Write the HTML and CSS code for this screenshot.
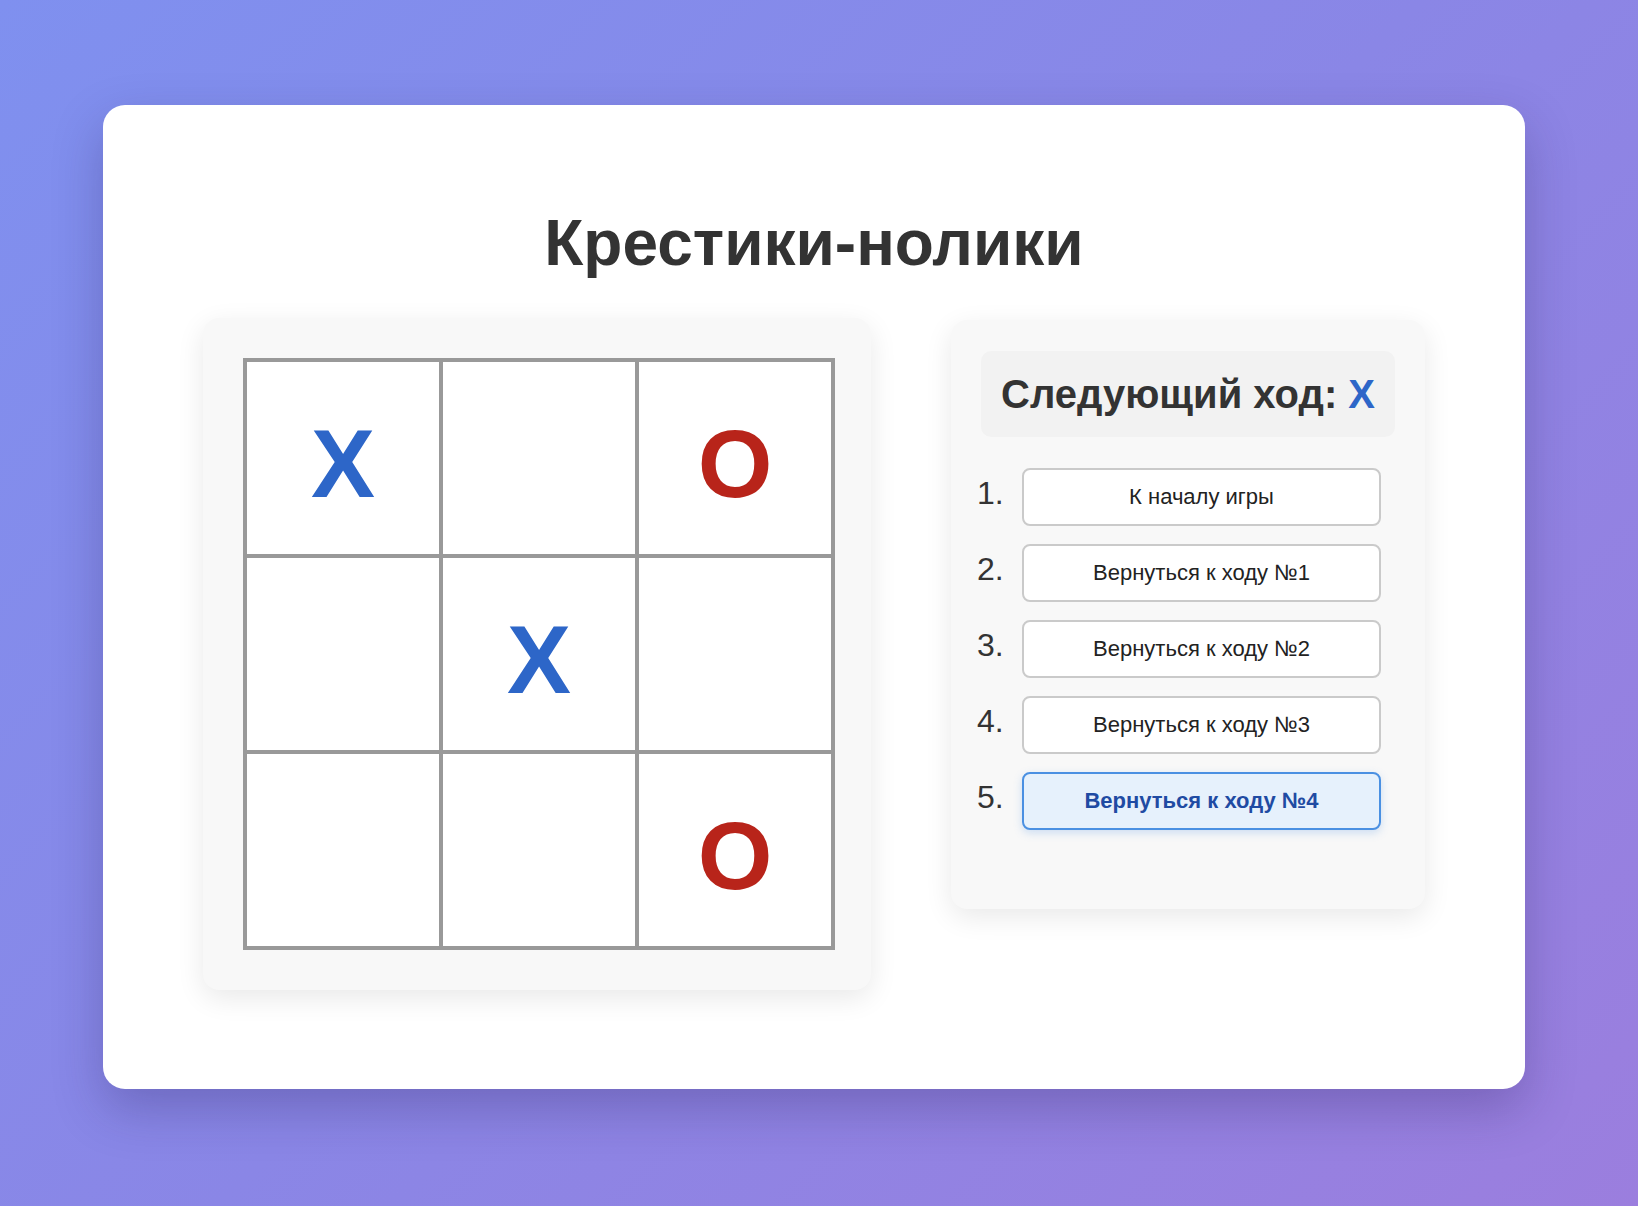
FILE: index.html
```html
<!DOCTYPE html>
<html lang="ru">
<head>
<meta charset="utf-8">
<title>Крестики-нолики</title>
<link rel="stylesheet" href="styles.css">
</head>
<body>
  <main class="card">
    <h1 class="title">Крестики-нолики</h1>
    <div class="game">
      <section class="board-panel">
        <div class="board">
          <div class="cell cell-x">X</div>
          <div class="cell"></div>
          <div class="cell cell-o">O</div>
          <div class="cell"></div>
          <div class="cell cell-x">X</div>
          <div class="cell"></div>
          <div class="cell"></div>
          <div class="cell"></div>
          <div class="cell cell-o">O</div>
        </div>
      </section>
      <section class="info-panel">
        <div class="status">Следующий ход: <span class="status-player">X</span></div>
        <ol class="moves">
          <li class="move"><span class="move-num">1.</span><button class="move-btn">К началу игры</button></li>
          <li class="move"><span class="move-num">2.</span><button class="move-btn">Вернуться к ходу №1</button></li>
          <li class="move"><span class="move-num">3.</span><button class="move-btn">Вернуться к ходу №2</button></li>
          <li class="move"><span class="move-num">4.</span><button class="move-btn">Вернуться к ходу №3</button></li>
          <li class="move"><span class="move-num">5.</span><button class="move-btn move-btn-active">Вернуться к ходу №4</button></li>
        </ol>
      </section>
    </div>
  </main>
</body>
</html>
```

FILE: styles.css
```css
* {
  box-sizing: border-box;
}

html, body {
  margin: 0;
  padding: 0;
}

body {
  min-height: 100vh;
  font-family: "Liberation Sans", Arial, Helvetica, sans-serif;
  color: #333;
  background: linear-gradient(135deg, #7f90ef 0%, #8a86e6 50%, #9b7ede 100%);
  padding: 105px 0 0 103px;
}

.card {
  width: 1422px;
  background: #ffffff;
  border-radius: 22px;
  box-shadow: 0 20px 50px rgba(40, 30, 90, 0.28);
  padding: 101px 100px 99px;
}

.title {
  margin: 0 0 38px;
  text-align: center;
  font-size: 64px;
  font-weight: 700;
  color: #333;
  line-height: normal;
}

.game {
  display: flex;
  align-items: flex-start;
  gap: 80px;
}

.board-panel {
  width: 668px;
  background: #f8f8f8;
  border-radius: 16px;
  padding: 40px 36px 40px 40px;
  box-shadow: 0 8px 28px rgba(0, 0, 0, 0.09);
}

.board {
  display: grid;
  grid-template-columns: repeat(3, 196px);
  grid-template-rows: repeat(3, 196px);
  width: 592px;
  border: 2px solid #999;
  background: #fff;
}

.cell {
  border: 2px solid #999;
  background: #fff;
  display: flex;
  align-items: center;
  justify-content: center;
  font-size: 96px;
  font-weight: 700;
  line-height: 1;
  padding-top: 12px;
}

.cell-x {
  color: #2d66c8;
}

.cell-o {
  color: #b8241a;
}

.info-panel {
  width: 474px;
  margin-top: 2px;
  background: #f8f8f8;
  border-radius: 16px;
  padding: 31px 30px 30px;
  box-shadow: 0 8px 28px rgba(0, 0, 0, 0.09);
}

.status {
  background: #f2f2f2;
  border-radius: 10px;
  padding: 20px;
  text-align: center;
  font-size: 40px;
  font-weight: 700;
  color: #333;
  line-height: 46px;
}

.status-player {
  color: #2d66c8;
}

.moves {
  list-style: none;
  margin: 31px 0 49px;
  padding: 0;
}

.move {
  display: flex;
  align-items: baseline;
  margin-bottom: 18px;
}

.move-num {
  width: 45px;
  margin-left: -4px;
  flex: none;
  text-align: left;
  font-size: 32px;
  color: #333;
  white-space: nowrap;
}

.move-btn {
  width: 359px;
  font-family: "Liberation Sans", Arial, Helvetica, sans-serif;
  font-size: 22px;
  line-height: 26px;
  padding: 14px 10px;
  color: #222;
  background: #fff;
  border: 2px solid #cacaca;
  border-radius: 8px;
  text-align: center;
  cursor: pointer;
}

.move-btn-active {
  font-weight: 700;
  color: #1f4ba3;
  background: #e6f1fc;
  border-color: #4a90e2;
  box-shadow: 0 3px 8px rgba(74, 144, 226, 0.25);
}
```
